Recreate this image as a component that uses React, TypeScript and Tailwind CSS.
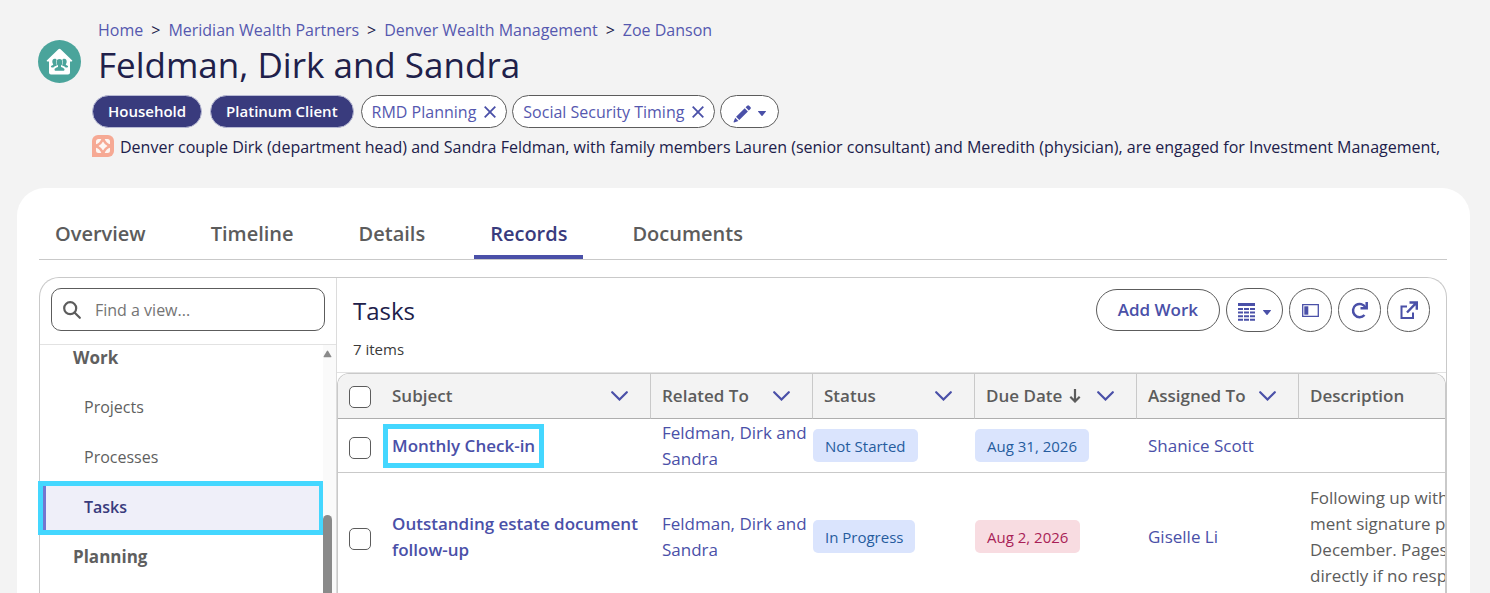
import type { ReactNode } from "react";

interface Task {
  subject: string;
  relatedTo: string;
  status: string;
  due: string;
  overdue?: boolean;
  assignee: string;
  description: string[];
  highlighted?: boolean;
}

const crumbs = ["Home", "Meridian Wealth Partners", "Denver Wealth Management", "Zoe Danson"];
const categories = ["Household", "Platinum Client"];
const tags = ["RMD Planning", "Social Security Timing"];
const tabs = ["Overview", "Timeline", "Details", "Records", "Documents"];

const columns = [
  { label: "Related To" },
  { label: "Status" },
  { label: "Due Date", sorted: true },
  { label: "Assigned To" },
];

const tasks: Task[] = [
  {
    subject: "Monthly Check-in",
    relatedTo: "Feldman, Dirk and Sandra",
    status: "Not Started",
    due: "Aug 31, 2026",
    assignee: "Shanice Scott",
    description: [],
    highlighted: true,
  },
  {
    subject: "Outstanding estate document follow-up",
    relatedTo: "Feldman, Dirk and Sandra",
    status: "In Progress",
    due: "Aug 2, 2026",
    overdue: true,
    assignee: "Giselle Li",
    description: [
      "Following up with",
      "ment signature pa",
      "December. Pages",
      "directly if no resp",
    ],
  },
];

function HouseholdIcon() {
  return (
    <svg viewBox="0 0 43 43" className="size-[43px] shrink-0" aria-hidden="true">
      <circle cx="21.5" cy="21.5" r="21.5" fill="#4aa49b" />
      <path
        d="M20.4 9.3a1.6 1.6 0 0 1 2.2 0L34 20.2c.6.6.3 1.2-.4 1.2H32v11.2a2 2 0 0 1-2 2H13a2 2 0 0 1-2-2V21.4H9.4c-.8 0-1-.7-.4-1.2z"
        fill="#fff"
      />
      <g fill="#4aa49b">
        <ellipse cx="21.5" cy="22.5" rx="2.9" ry="3.4" />
        <path d="M20 25h3v1.900c2.200.8 3.500 1.300 3.500 2.700 0 .9-.5 1.200-1.300 1.200h-7.400c-.8 0-1.300-.3-1.300-1.200 0-1.400 1.300-1.900 3.500-2.700z" />
        <path d="M16.700 18.700c1 0 1.700.5 2 1.200-.9 1.300-.9 3.300 0 4.700v1.200c-1.600.4-2.700.9-3.200 1.600h-1.800c-.5 0-.8-.3-.8-.8 0-1 .9-1.200 2.200-1.700v-.8c-.6-.6-.8-1.500-.8-2.500 0-1.800.9-2.900 2.400-2.900zM26.300 18.700c-1 0-1.700.5-2 1.200.9 1.300.9 3.300 0 4.700v1.200c1.600.4 2.700.9 3.200 1.600h1.800c.5 0 .8-.3.8-.8 0-1-.9-1.200-2.200-1.700v-.8c.6-.6.8-1.500.8-2.500 0-1.800-.9-2.900-2.400-2.900z" />
      </g>
    </svg>
  );
}

function SummaryIcon() {
  return (
    <svg viewBox="0 0 22 22" className="size-[22px] shrink-0" aria-hidden="true">
      <path d="M6 0h10a6 6 0 0 1 6 6v10a6 6 0 0 1-6 6H0V6a6 6 0 0 1 6-6z" fill="#f6a994" />
      <g fill="#fdf6f3">
        <path d="M4 9.300V6.500A2.500 2.500 0 0 1 6.500 4h2.800Q8 8 4 9.300z" />
        <path d="M18 9.300V6.500A2.500 2.500 0 0 0 15.500 4h-2.800Q14 8 18 9.300z" />
        <path d="M18 12.700v2.800a2.500 2.500 0 0 1-2.500 2.500h-2.800Q14 14 18 12.700z" />
        <path d="M4 12.700v2.800A2.500 2.500 0 0 0 6.500 18h2.800Q8 14 4 12.700z" />
        <path d="M11 6.500Q12.500 9.500 15.500 11 12.500 12.500 11 15.500 9.500 12.500 6.500 11 9.500 9.500 11 6.500z" />
      </g>
    </svg>
  );
}

function CloseIcon() {
  return (
    <svg viewBox="0 0 12 12" className="size-3" fill="none" stroke="#4a50a8" strokeWidth="1.800" aria-hidden="true">
      <path d="M.7.7l10.600 10.600M11.300.7L.7 11.300" />
    </svg>
  );
}

function Caret() {
  return (
    <svg viewBox="0 0 8 5" className="h-[5px] w-2" fill="#4a50a8" aria-hidden="true">
      <path d="M.5 0h7c.5 0 .6.4.3.7L4.500 4.700a.7.7 0 0 1-1 0L.2.7C-.1.4 0 0 .5 0z" />
    </svg>
  );
}

function Chevron() {
  return (
    <svg viewBox="0 0 17 10" className="h-[10px] w-[17px]" fill="none" stroke="#4a50a8" strokeWidth="2.200" aria-hidden="true">
      <path d="M1.200 1.200l7.300 7.300 7.300-7.300" strokeLinecap="round" />
    </svg>
  );
}

function RoundButton({ label, children }: { label: string; children: ReactNode }) {
  return (
    <button
      aria-label={label}
      className="flex h-11 min-w-[43px] items-center justify-center rounded-full border border-[#5c5c5c] bg-white"
    >
      {children}
    </button>
  );
}

function Checkbox({ label }: { label: string }) {
  return (
    <input
      type="checkbox"
      aria-label={label}
      className="block size-[22px] appearance-none rounded-[5px] border border-[#5c5c5c] bg-white checked:bg-[#4a50a8]"
    />
  );
}

function PageHeader() {
  return (
    <header className="flex pt-[18px] pl-[38px]">
      <div className="w-[54px] shrink-0 pt-[22px]">
        <HouseholdIcon />
      </div>
      <div className="min-w-0 flex-1">
        <nav aria-label="Breadcrumb" className="flex gap-2 pl-1.5 text-base leading-6">
          {crumbs.map((crumb, i) => (
            <span key={crumb} className="flex gap-2">
              {i > 0 && <span>&gt;</span>}
              <a href="#" className="text-[#5558af]">{crumb}</a>
            </span>
          ))}
        </nav>
        <h1 className="pl-1.5 text-[35px] leading-[46px]">Feldman, Dirk and Sandra</h1>
        <div className="mt-[7px] flex gap-[5px]">
          <div className="flex gap-2 pr-0.5">
            {categories.map((c) => (
              <span key={c} className="flex h-[33px] items-center rounded-full border border-[#b9bbd4] bg-[#393b7d] px-[15px] text-[15px] font-semibold text-white">
                {c}
              </span>
            ))}
          </div>
          {tags.map((tag) => (
            <span key={tag} className="flex h-[33px] items-center gap-2 rounded-full border border-[#5c5c5c] bg-white px-2.5 text-base text-[#5558af]">
              {tag}
              <button aria-label={`Remove ${tag}`}>
                <CloseIcon />
              </button>
            </span>
          ))}
          <button aria-label="Edit tags" className="flex h-[33px] items-center gap-[7px] rounded-full border border-[#5c5c5c] bg-white px-3 pt-1">
            <svg viewBox="0 0 18 18" className="size-[18px]" fill="#4a50a8" aria-hidden="true">
              <path d="M12.600 2.300l1.600-1.600a1.400 1.400 0 0 1 1.900 0l1.300 1.300a1.400 1.400 0 0 1 0 1.900l-1.600 1.600zM11.700 3.200l3.200 3.200-8.600 8.600-3.200-3.200zM2.200 12.700l3.200 3.200-4.300 1.500c-.4.100-.7-.2-.5-.6z" />
            </svg>
            <Caret />
          </button>
        </div>
        <div className="mt-[7px] flex gap-1.5 overflow-hidden">
          <SummaryIcon />
          <p className="text-base leading-6 whitespace-nowrap">
            Denver couple Dirk (department head) and Sandra Feldman, with family members Lauren (senior consultant) and Meredith (physician), are engaged for Investment Management,
          </p>
        </div>
      </div>
    </header>
  );
}

function Sidebar() {
  return (
    <aside className="flex w-[297px] shrink-0 flex-col border-r border-[#dcdcdc]">
      <div className="border-b border-[#e2e2e2] px-[11px] pt-2.5 pb-[13px]">
        <label className="flex h-[43px] items-center gap-3.5 rounded-[10px] border border-[#5c5c5c] bg-white pr-3 pl-[11px]">
          <svg viewBox="0 0 18 18" className="size-[18px] shrink-0" fill="none" stroke="#5c5c5c" strokeWidth="2.200" aria-hidden="true">
            <circle cx="7.200" cy="7.200" r="6" />
            <path d="M11.500 11.500l5.300 5.300" strokeLinecap="round" />
          </svg>
          <input
            type="search"
            aria-label="Find a view"
            placeholder="Find a view..."
            className="w-full bg-transparent text-base outline-none placeholder:text-[#747474]"
          />
        </label>
      </div>
      <div className="flex min-h-0 flex-1">
        <nav aria-label="Views" className="flex-1 text-base text-[#5f5f5f]">
          <h3 className="h-[37px] pl-[33px] text-[17px] leading-[25px] font-bold">Work</h3>
          <a href="#" className="flex h-[50px] items-center pl-11">Projects</a>
          <a href="#" className="flex h-[50px] items-center pl-11">Processes</a>
          <div className="h-[50px] py-1 pr-1 pl-[3px]">
            <a
              href="#"
              aria-current="page"
              className="flex h-11 items-center border-l-3 border-[#7476d0] bg-[#efeff9] pb-0.5 pl-[38px] font-semibold text-[#393b7d] outline-5 outline-[#44d7ff]"
            >
              Tasks
            </a>
          </div>
          <h3 className="flex h-[50px] items-center pl-[33px] text-[17px] font-bold">Planning</h3>
        </nav>
        <div className="flex w-[13px] flex-col items-start bg-[#fafafa] pt-[5px]">
          <svg viewBox="0 0 10 8" className="h-2 w-[9px] shrink-0" fill="#8a8a8a" aria-hidden="true">
            <path d="M4.300.6a.9.9 0 0 1 1.400 0l3.500 5.800c.4.700.1 1.200-.6 1.200H1.400c-.7 0-1-.5-.6-1.200z" />
          </svg>
          <div className="mt-[157px] w-[9px] flex-1 rounded-t-full bg-[#8a8a8a]" />
        </div>
      </div>
    </aside>
  );
}

function HeaderCell({ label, sorted }: { label: string; sorted?: boolean }) {
  return (
    <th className="h-[45px] border-r border-b border-r-[#c9c9c9] border-b-[#aeaeae] bg-[#f3f3f3] pr-[22px] pl-[11px] text-left font-semibold">
      <div className="flex items-center justify-between">
        <span className="flex items-center gap-[7px] whitespace-nowrap">
          {label}
          {sorted && (
            <svg viewBox="0 0 12 14" className="h-3.5 w-3" fill="none" stroke="#5c5c5c" strokeWidth="2.200" aria-hidden="true">
              <path d="M6 0v12M1.300 7.800L6 12.500l4.700-4.700" />
            </svg>
          )}
        </span>
        <button aria-label={`${label} options`}>
          <Chevron />
        </button>
      </div>
    </th>
  );
}

function TaskTable() {
  return (
    <div className="overflow-hidden rounded-t-[12px] border-x border-t border-[#c9c9c9]">
      <table className="w-full table-fixed border-separate border-spacing-0 text-[17px] leading-[26px] text-[#5c5c5c]">
        <colgroup>
          <col className="w-[43px]" />
          <col className="w-[270px]" />
          <col className="w-[162px]" />
          <col className="w-[162px]" />
          <col className="w-[162px]" />
          <col className="w-[162px]" />
          <col />
        </colgroup>
        <thead>
          <tr>
            <th className="border-b border-[#aeaeae] bg-[#f3f3f3] pt-0.5 pl-[11px]">
              <Checkbox label="Select all" />
            </th>
            <HeaderCell label="Subject" />
            {columns.map((c) => (
              <HeaderCell key={c.label} label={c.label} sorted={c.sorted} />
            ))}
            <th className="border-b border-[#aeaeae] bg-[#f3f3f3] pl-[11px] text-left font-semibold">Description</th>
          </tr>
        </thead>
        <tbody className="[&_td]:border-b [&_td]:border-[#c9c9c9]">
          {tasks.map((task) => (
            <tr key={task.subject} className={task.highlighted ? "h-[54px]" : "h-32"}>
              <td className="pt-1 pl-[11px]">
                <Checkbox label={`Select ${task.subject}`} />
              </td>
              <td className="pl-[11px] font-semibold text-[#4a50a8]">
                <a
                  href="#"
                  className={task.highlighted ? "inline-block outline-5 outline-offset-4 outline-[#44d7ff]" : ""}
                >
                  {task.subject}
                </a>
              </td>
              <td className="pl-[11px] text-[#4a50a8]">
                <a href="#">{task.relatedTo}</a>
              </td>
              <td>
                <span className="inline-flex h-[33px] items-center rounded-[5px] bg-[#dae4fd] px-3 text-[15px] text-[#265c9e]">
                  {task.status}
                </span>
              </td>
              <td>
                <span
                  className={`inline-flex h-[33px] items-center rounded-[5px] px-3 text-[15px] ${
                    task.overdue ? "bg-[#f8dce1] text-[#a91f57]" : "bg-[#dae4fd] text-[#265c9e]"
                  }`}
                >
                  {task.due}
                </span>
              </td>
              <td className="pl-[11px] text-[#4a50a8]">
                <a href="#">{task.assignee}</a>
              </td>
              <td className="overflow-hidden pl-[11px] whitespace-nowrap">
                {task.description.map((line) => (
                  <div key={line}>{line}</div>
                ))}
              </td>
            </tr>
          ))}
        </tbody>
      </table>
    </div>
  );
}

function TaskPanel() {
  return (
    <section className="min-w-0 flex-1">
      <div className="flex justify-between border-b border-[#e2e2e2] pt-2.5 pr-4 pb-3 pl-4">
        <div>
          <h2 className="text-2xl leading-[46px]">Tasks</h2>
          <p className="pt-1 text-[15px] leading-[22px] text-[#3a3a3a]">7 items</p>
        </div>
        <div className="flex items-start gap-1.5">
          <button className="mt-px h-[42px] rounded-full border border-[#5c5c5c] bg-white px-[21px] text-[17px] font-semibold text-[#4a50a8]">
            Add Work
          </button>
          <RoundButton label="Choose display">
            <span className="flex items-center gap-2 px-[11px] pt-1">
              <svg viewBox="0 0 17 18" className="h-[18px] w-[17px]" fill="#4a50a8" aria-hidden="true">
                <path d="M0 0h17v3H0z" />
                {[5, 8.6, 12.2, 15.8].map((y) => (
                  <path key={y} d={`M0 ${y}h5v2H0zM6 ${y}h5v2H6zM12 ${y}h5v2h-5z`} />
                ))}
              </svg>
              <Caret />
            </span>
          </RoundButton>
          <RoundButton label="Toggle side panel">
            <svg viewBox="0 0 17 13" className="h-[13px] w-[17px]" aria-hidden="true">
              <path d="M.7.7h15.600v11.600H.7z" fill="none" stroke="#4a50a8" strokeWidth="1.300" />
              <path d="M2.300 2.300h4v8.400h-4z" fill="#4a50a8" />
            </svg>
          </RoundButton>
          <RoundButton label="Refresh">
            <svg viewBox="0 0 18 18" className="size-[18px]" fill="none" stroke="#4a50a8" strokeWidth="2.500" aria-hidden="true">
              <path d="M13.500 14A6.600 6.600 0 1 1 14.500 6.500" />
              <path d="M15.700 1v6.200H9.500" />
            </svg>
          </RoundButton>
          <RoundButton label="Open in new window">
            <svg viewBox="0 0 18 18" className="size-[18px]" fill="none" stroke="#4a50a8" strokeWidth="2" aria-hidden="true">
              <path d="M7 5.500H1.500V17H13v-5.500" />
              <path d="M7 11.500L16 2.200M9.500 1.500h7.300v7.300" strokeWidth="2.400" />
            </svg>
          </RoundButton>
        </div>
      </div>
      <TaskTable />
    </section>
  );
}

export default function App() {
  return (
    <main className="flex h-screen flex-col overflow-hidden bg-[#f3f3f3] font-['Open_Sans','Noto_Sans',sans-serif] text-[#20204a]">
      <PageHeader />
      <div className="mx-5 mt-[29px] ml-[17px] flex min-h-0 flex-1 flex-col rounded-t-[28px] bg-white px-[22px]">
        <div role="tablist" className="mr-px flex shrink-0 gap-[33px] border-b border-[#c9c9c9] pt-[19px] text-xl text-[#5c5c5c]">
          {tabs.map((tab) => (
            <button
              key={tab}
              role="tab"
              aria-selected={tab === "Records"}
              className={`h-[52px] border-b-4 px-4 pt-1.5 font-semibold ${
                tab === "Records" ? "border-[#4a50a8] text-[#393b7d]" : "border-transparent"
              }`}
            >
              {tab}
            </button>
          ))}
        </div>
        <div className="mt-[17px] mr-px flex min-h-0 flex-1 rounded-t-[20px] border-x border-t border-[#c9c9c9]">
          <Sidebar />
          <TaskPanel />
        </div>
      </div>
    </main>
  );
}
